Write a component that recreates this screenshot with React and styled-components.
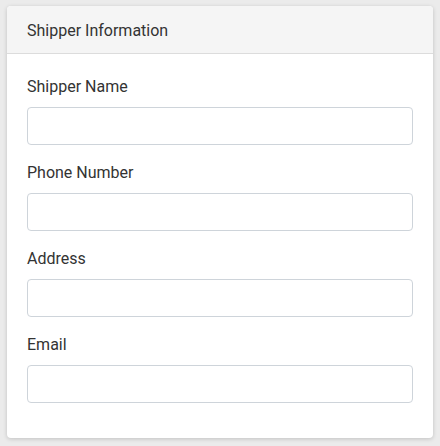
import styled, { createGlobalStyle } from "styled-components";

const GlobalStyle = createGlobalStyle`
  html, body {
    margin: 0;
    padding: 0;
    background: #ebebeb;
    font-family: Roboto, "Liberation Sans", sans-serif;
  }
`;

const Page = styled.div`
  padding: 6px 7px 7px 7px;
`;

const Card = styled.div`
  background: #fff;
  border-radius: 4px;
  box-shadow: 0 1px 4px rgba(0, 0, 0, 0.18);
  overflow: hidden;
`;

const CardHeader = styled.div`
  background: #f5f5f5;
  border-bottom: 1px solid #dcdcdc;
  height: 48px;
  box-sizing: border-box;
  padding: 2px 20px 0 20px;
  display: flex;
  align-items: center;
  font-size: 16px;
  color: #333;
`;

const CardBody = styled.div`
  padding: 21px 20px 35px 20px;
`;

const Field = styled.div`
  display: flex;
  flex-direction: column;
  & + & {
    margin-top: 16px;
  }
`;

const Label = styled.label`
  font-size: 16px;
  line-height: 24px;
  color: #333;
  margin-bottom: 8px;
`;

const Input = styled.input`
  height: 38px;
  box-sizing: border-box;
  border: 1px solid #ced4da;
  border-radius: 4px;
  padding: 0 12px;
  font-size: 16px;
  font-family: inherit;
  outline: none;
`;

const fields = ["Shipper Name", "Phone Number", "Address", "Email"];

export default function App() {
  return (
    <>
      <GlobalStyle />
      <Page>
        <Card>
          <CardHeader>Shipper Information</CardHeader>
          <CardBody>
            {fields.map((f) => (
              <Field key={f}>
                <Label>{f}</Label>
                <Input type="text" />
              </Field>
            ))}
          </CardBody>
        </Card>
      </Page>
    </>
  );
}
